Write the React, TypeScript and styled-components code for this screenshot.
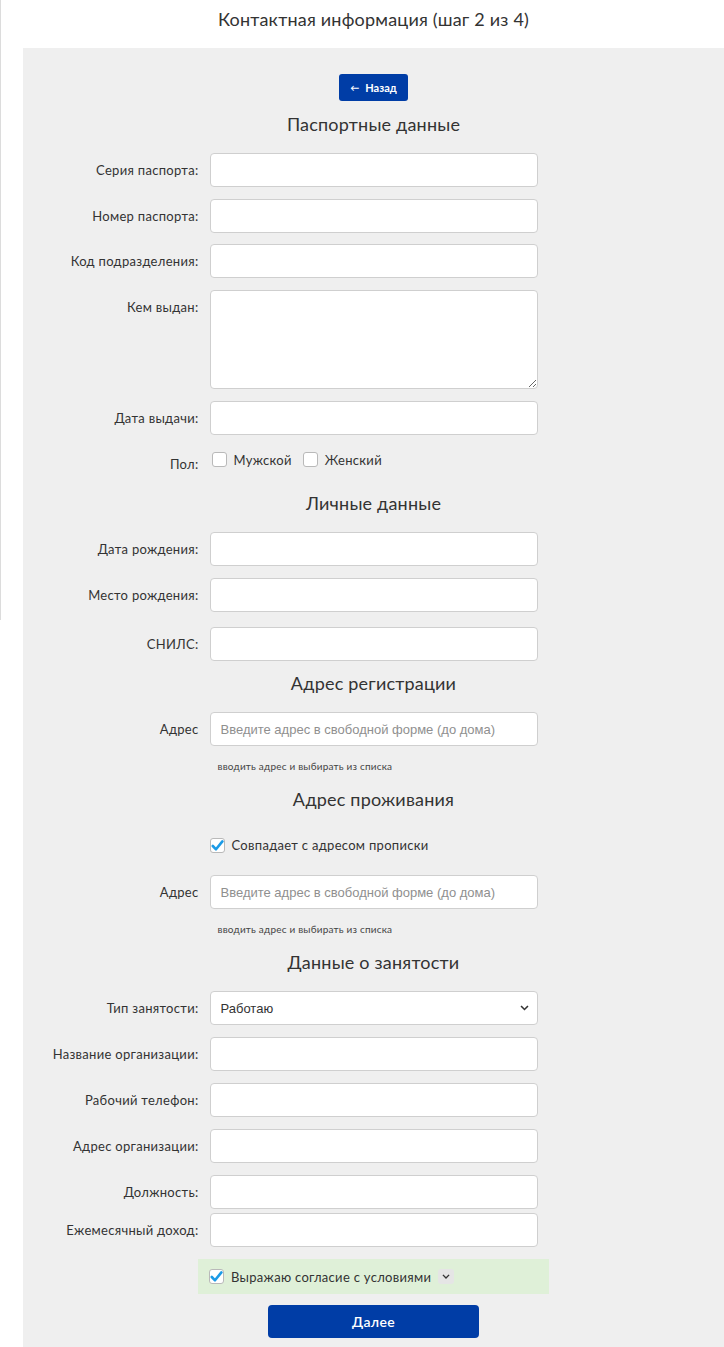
import React from "react";
import styled, { createGlobalStyle } from "styled-components";

const GlobalStyle = createGlobalStyle`
  html,
  body {
    margin: 0;
    padding: 0;
  }

  body {
    /* thin divider of the left column */
    background: #fff linear-gradient(#dcdcdc, #dcdcdc) 0 0 / 1px 620px no-repeat;
    font-family: Lato, "Noto Sans", sans-serif;
    color: #333;
    overflow: hidden;
  }
`;

const Page = styled.div`
  margin-left: 23px;
`;

const Title = styled.h1`
  margin: 0;
  padding: 7px 0 17px;

  font-size: 18px;
  font-weight: 400;
  line-height: 24px;
  letter-spacing: 0.2px;
  text-align: center;
  color: #333;
`;

const Panel = styled.div`
  background: #efefef;
  padding: 26px 0 9px;
`;

const BackButton = styled.button`
  display: flex;
  align-items: center;
  justify-content: center;
  gap: 6px;

  width: 69px;
  height: 27px;
  margin: 0 auto 13px;
  padding: 0;

  background: #003da6;
  color: #fff;
  border: none;
  border-radius: 3px;

  font-family: inherit;
  font-size: 11px;
  font-weight: 700;
`;

const Arrow = styled.span`
  font-size: 9px;
`;

const SectionTitle = styled.h2`
  margin: 0 0 19px;

  font-size: 18px;
  font-weight: 400;
  line-height: 20px;
  letter-spacing: 0.2px;
  text-align: center;
  color: #333;
`;

type RowProps = {
  $mb?: number;
};

const Row = styled.div<RowProps>`
  display: grid;
  grid-template-columns: 1fr 328px 1fr;
  min-height: 34px;
  margin-bottom: ${({ $mb }) => ($mb === undefined ? 12 : $mb)}px;
`;

const Label = styled.label`
  grid-column: 1;
  justify-self: end;
  padding: 9px 11px 0 0;

  font-size: 13px;
  line-height: 16px;
  letter-spacing: 0.3px;
  color: #333;
  white-space: nowrap;
`;

const Field = styled.div`
  grid-column: 2;
  display: flex;
  flex-direction: column;
`;

const TextInput = styled.input`
  box-sizing: border-box;
  width: 100%;
  height: 34px;
  padding: 0 10px;

  background: #fff;
  border: 1px solid #cfcfcf;
  border-radius: 4px;

  font-family: "Liberation Sans", Arial, sans-serif;
  font-size: 13px;
  color: #333;

  &::placeholder {
    color: #8f8f8f;
  }
`;

const TextArea = styled.textarea`
  box-sizing: border-box;
  width: 100%;
  height: 99px;
  padding: 8px 10px;

  background: #fff;
  border: 1px solid #cfcfcf;
  border-radius: 4px;

  font-family: "Liberation Sans", Arial, sans-serif;
  font-size: 13px;
`;

const SelectBox = styled.div`
  box-sizing: border-box;
  display: flex;
  align-items: center;
  height: 34px;
  padding: 0 8px 0 0;

  background: #fff;
  border: 1px solid #cfcfcf;
  border-radius: 4px;
`;

const Select = styled.select`
  flex: 1;
  height: 100%;
  padding: 0 10px;

  appearance: none;
  background: transparent;
  border: none;
  outline: none;

  font-family: "Liberation Sans", Arial, sans-serif;
  font-size: 13px;
  color: #333;
`;

const OptionsLine = styled.div`
  display: flex;
  align-items: center;
  gap: 11px;
  height: 15px;
  padding: 5px 0 0 2px;
`;

const CheckLine = styled.div`
  display: flex;
  align-items: center;
  gap: 7px;

  font-size: 13px;
  line-height: 18px;
  letter-spacing: 0.3px;
  color: #333;
`;

const Box = styled.span`
  box-sizing: border-box;
  display: inline-flex;
  align-items: center;
  justify-content: center;
  flex: none;
  width: 15px;
  height: 15px;

  background: #fff;
  border: 1px solid #b9b9b9;
  border-radius: 3px;
`;

const Hint = styled.div`
  grid-column: 2;
  padding-left: 8px;

  font-size: 10px;
  line-height: 16px;
  letter-spacing: 0.2px;
  color: #444;
`;

const HintRow = styled.div`
  display: grid;
  grid-template-columns: 1fr 328px 1fr;
  margin: 12px 0 15px;
`;

/* the heading's 19px bottom margin collapses into this one */
const SameAddressRow = styled.div`
  display: grid;
  grid-template-columns: 1fr 328px 1fr;
  margin: 27px 0 21px;
`;

const Consent = styled.div`
  box-sizing: border-box;
  display: flex;
  align-items: center;
  gap: 7px;

  width: 351px;
  height: 35px;
  margin: 0 auto 11px;
  padding-left: 11px;

  background: #dff0d8;
  font-size: 13px;
  letter-spacing: 0.3px;
  color: #333;
`;

const ToggleButton = styled.span`
  display: inline-flex;
  align-items: center;
  justify-content: center;
  width: 16px;
  height: 15px;

  background: #e5e5e5;
  border-radius: 3px;
`;

const NextButton = styled.button`
  display: block;
  width: 211px;
  height: 33px;
  margin: 0 auto;

  background: #003da6;
  color: #fff;
  border: none;
  border-radius: 4px;

  font-family: inherit;
  font-size: 14px;
  font-weight: 600;
  letter-spacing: 0.3px;
`;

const Check = ({ checked = false }: { checked?: boolean }) => (
  <Box>
    {checked && (
      <svg width="13" height="13" viewBox="0 0 13 13">
        <path
          d="M1.8 7 L5 10.3 L11.4 2.4"
          fill="none"
          stroke="#1c9be6"
          strokeWidth="2.6"
          strokeLinecap="round"
          strokeLinejoin="round"
        />
      </svg>
    )}
  </Box>
);

const Chevron = ({ size = 9 }: { size?: number }) => (
  <svg width={size} height={size * 0.66} viewBox="0 0 9 6">
    <path d="M1 1 L4.5 4.5 L8 1" fill="none" stroke="#333" strokeWidth="1.6" />
  </svg>
);

type InputRowProps = {
  label: string;
  mb?: number;
  placeholder?: string;
};

const InputRow = ({ label, mb, placeholder }: InputRowProps) => (
  <Row $mb={mb}>
    <Label>{label}</Label>
    <Field>
      <TextInput type="text" placeholder={placeholder} />
    </Field>
  </Row>
);

const ADDRESS_PLACEHOLDER = "Введите адрес в свободной форме (до дома)";
const ADDRESS_HINT = "вводить адрес и выбирать из списка";

export default function App() {
  return (
    <>
      <GlobalStyle />
      <Page>
        <Title>Контактная информация (шаг 2 из 4)</Title>
        <Panel>
          <BackButton type="button">
            <Arrow>←</Arrow>
            <span>Назад</span>
          </BackButton>

          <SectionTitle>Паспортные данные</SectionTitle>
          <InputRow label="Серия паспорта:" />
          <InputRow label="Номер паспорта:" mb={11} />
          <InputRow label="Код подразделения:" />
          <Row>
            <Label>Кем выдан:</Label>
            <Field>
              <TextArea />
            </Field>
          </Row>
          <InputRow label="Дата выдачи:" />
          <Row>
            <Label>Пол:</Label>
            <Field>
              <OptionsLine>
                <CheckLine>
                  <Check />
                  Мужской
                </CheckLine>
                <CheckLine>
                  <Check />
                  Женский
                </CheckLine>
              </OptionsLine>
            </Field>
          </Row>

          <SectionTitle>Личные данные</SectionTitle>
          <InputRow label="Дата рождения:" />
          <InputRow label="Место рождения:" mb={15} />
          <InputRow label="СНИЛС:" />

          <SectionTitle>Адрес регистрации</SectionTitle>
          <InputRow label="Адрес" mb={0} placeholder={ADDRESS_PLACEHOLDER} />
          <HintRow>
            <Hint>{ADDRESS_HINT}</Hint>
          </HintRow>

          <SectionTitle>Адрес проживания</SectionTitle>
          <SameAddressRow>
            <Field>
              <CheckLine>
                <Check checked />
                Совпадает с адресом прописки
              </CheckLine>
            </Field>
          </SameAddressRow>
          <InputRow label="Адрес" mb={0} placeholder={ADDRESS_PLACEHOLDER} />
          <HintRow>
            <Hint>{ADDRESS_HINT}</Hint>
          </HintRow>

          <SectionTitle>Данные о занятости</SectionTitle>
          <Row>
            <Label>Тип занятости:</Label>
            <Field>
              <SelectBox>
                <Select defaultValue="work">
                  <option value="work">Работаю</option>
                  <option value="own">Собственный бизнес</option>
                  <option value="none">Не работаю</option>
                </Select>
                <Chevron />
              </SelectBox>
            </Field>
          </Row>
          <InputRow label="Название организации:" />
          <InputRow label="Рабочий телефон:" />
          <InputRow label="Адрес организации:" />
          <InputRow label="Должность:" mb={4} />
          <InputRow label="Ежемесячный доход:" />

          <Consent>
            <Check checked />
            Выражаю согласие с условиями
            <ToggleButton>
              <Chevron size={8} />
            </ToggleButton>
          </Consent>
          <NextButton type="button">Далее</NextButton>
        </Panel>
      </Page>
    </>
  );
}
